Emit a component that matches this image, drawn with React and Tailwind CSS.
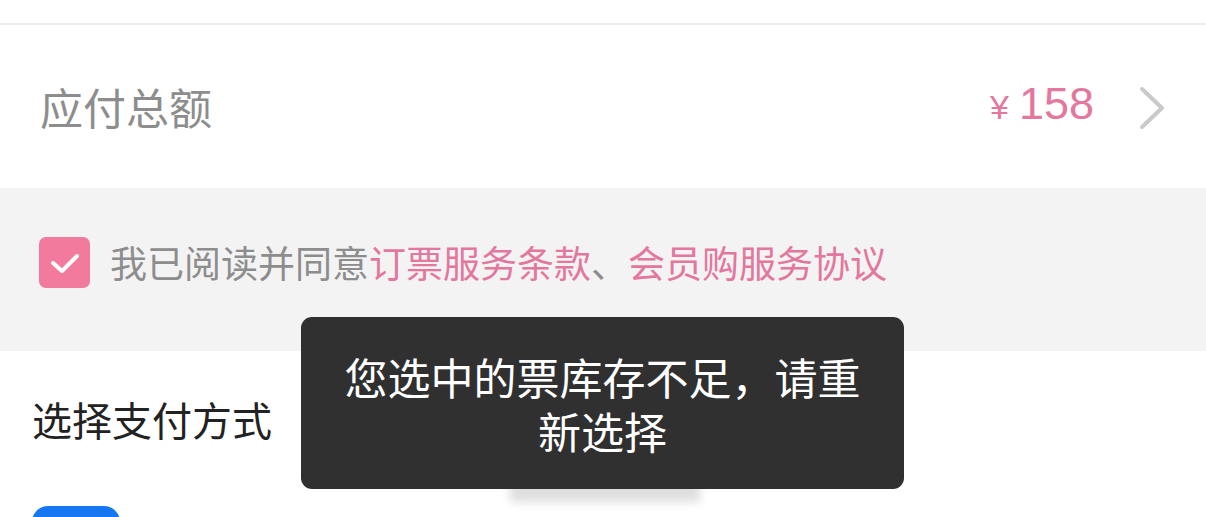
export default function App() {
  const cjk = { fontFamily: '"Noto Sans CJK SC", "Noto Sans", sans-serif' }
  return (
    <div className="relative w-full h-[517px] overflow-hidden bg-white" style={cjk}>
      <div className="h-[25px] border-b-2 border-[#ececec]" />

      <div className="h-[163px] flex items-center pl-[40px] pr-[40px]">
        <span className="text-[43px] leading-none text-[#8d8d8d]">应付总额</span>
        <div className="ml-auto flex items-center">
          <span className="flex items-baseline text-[#e3779d]" style={{ fontFamily: '"Liberation Sans", Arial, sans-serif' }}>
            <span className="text-[34px] mr-[10px]">¥</span>
            <span className="text-[45px] leading-none">158</span>
          </span>
          <svg className="ml-[44px] mt-[3px]" width="28" height="44" viewBox="0 0 28 44" fill="none">
            <path d="M4 3 L24 22 L4 41" stroke="#c9c9c9" strokeWidth="4" strokeLinecap="round" strokeLinejoin="round" />
          </svg>
        </div>
      </div>

      <div className="h-[163px] bg-[#f3f3f3] flex items-center pl-[39px] pb-[14px]">
        <div className="w-[51px] h-[51px] rounded-[7px] bg-[#f27a9d] flex items-center justify-center">
          <svg width="30" height="22" viewBox="0 0 30 22" fill="none">
            <path d="M3 11 L12 19 L27 4" stroke="#fff" strokeWidth="4" strokeLinecap="round" strokeLinejoin="round" />
          </svg>
        </div>
        <p className="ml-[20px] text-[37px] leading-none text-[#8d8d8d]">
          我已阅读并同意<span className="text-[#e3779d]">订票服务条款</span>、<span className="text-[#e3779d]">会员购服务协议</span>
        </p>
      </div>

      <div className="pl-[32px]">
        <h2 className="pt-[48px] text-[40px] leading-none text-[#222]">选择支付方式</h2>
        <div className="mt-[67px] w-[88px] h-[40px] rounded-[16px] bg-[#1677f3]" />
      </div>

      <div className="absolute left-[510px] top-[478px] w-[190px] h-[24px] bg-[#bdbdbd] blur-[5px] opacity-50" />

      <div className="absolute left-[301px] top-[317px] w-[603px] h-[172px] rounded-[11px] bg-[#303030] flex items-center justify-center px-[43px]">
        <p className="text-white text-[43px] leading-[54px] text-center">您选中的票库存不足，请重新选择</p>
      </div>
    </div>
  )
}
